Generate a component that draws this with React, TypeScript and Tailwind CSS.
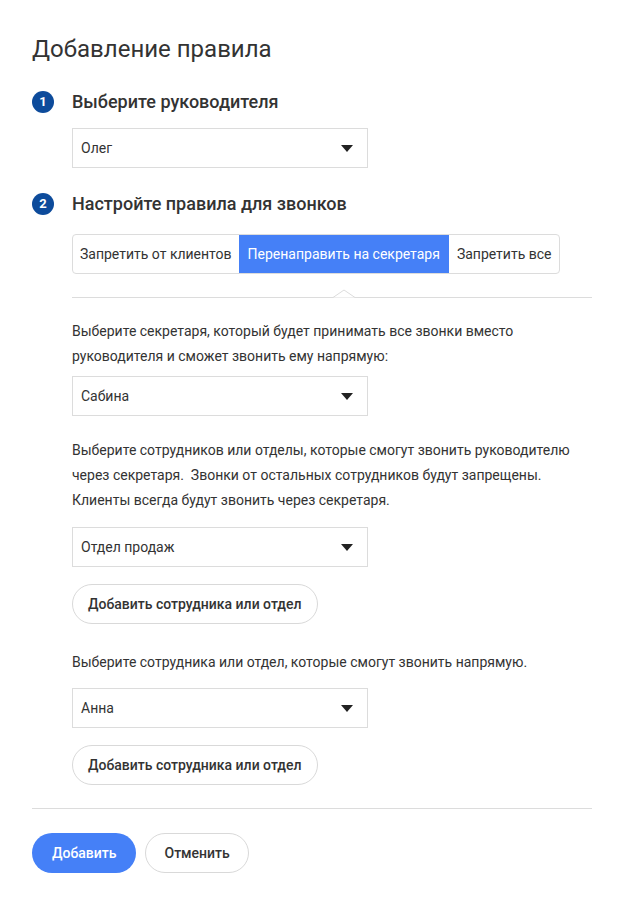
import React from "react";

function Step({ n, title }: { n: number; title: string }) {
    return (
        <div className="flex items-center gap-[18px]">
            <div className="flex h-[22px] w-[22px] items-center justify-center rounded-full bg-[#0d4b9b] text-[13px] font-bold text-white">
                {n}
            </div>
            <h2 className="text-[18px] font-medium text-[#333]">{title}</h2>
        </div>
    );
}

function Select({ value }: { value: string }) {
    return (
        <div className="flex h-[40px] w-[296px] items-center justify-between border border-[#dcdcdc] bg-white pl-[8px] pr-[14px] text-[14px] text-[#333]">
            <span>{value}</span>
            <svg width="12" height="7" viewBox="0 0 12 7">
                <path d="M0 0h12L6 7z" fill="#222" />
            </svg>
        </div>
    );
}

function AddButton() {
    return (
        <button className="h-[40px] w-fit rounded-full border border-[#d9d9d9] bg-white px-[15px] text-[14px] font-medium text-[#333]">
            Добавить сотрудника или отдел
        </button>
    );
}

export default function App() {
    return (
        <div className="min-h-screen bg-white px-[32px] pt-[34px] font-['Roboto',sans-serif] text-[#333]">
            <h1 className="text-[24px] leading-[30px] text-[#333]">Добавление правила</h1>

            <div className="mt-[24px]">
                <Step n={1} title="Выберите руководителя" />
                <div className="ml-[40px] mt-[13px]">
                    <Select value="Олег" />
                </div>
            </div>

            <div className="mt-[22px]">
                <Step n={2} title="Настройте правила для звонков" />
                <div className="ml-[40px] mt-[17px]">
                    <div className="flex h-[40px] w-fit overflow-hidden rounded-[4px] border border-[#dcdcdc] text-[14px]">
                        <div className="flex items-center px-[7px]">Запретить от клиентов</div>
                        <div className="flex items-center bg-[#4580f7] px-[9px] text-white">Перенаправить на секретаря</div>
                        <div className="flex items-center px-[8px]">Запретить все</div>
                    </div>

                    <div className="relative mt-[23px] h-px bg-[#dcdcdc]">
                        <svg className="absolute left-[261px] top-[-8px]" width="22" height="9" viewBox="0 0 22 9">
                            <path d="M0 8.5L11 1L22 8.5" fill="white" stroke="#dcdcdc" />
                        </svg>
                    </div>

                    <p className="mt-[21px] whitespace-nowrap text-[14px] leading-[25px]">
                        Выберите секретаря, который будет принимать все звонки вместо
                        <br />
                        руководителя и сможет звонить ему напрямую:
                    </p>
                    <div className="mt-[7px]">
                        <Select value="Сабина" />
                    </div>

                    <p className="mt-[22px] whitespace-pre text-[14px] leading-[25px]">
                        {"Выберите сотрудников или отделы, которые смогут звонить руководителю"}
                        <br />
                        {"через секретаря.  Звонки от остальных сотрудников будут запрещены."}
                        <br />
                        {"Клиенты всегда будут звонить через секретаря."}
                    </p>
                    <div className="mt-[14px]">
                        <Select value="Отдел продаж" />
                    </div>
                    <div className="mt-[17px]">
                        <AddButton />
                    </div>

                    <p className="mt-[26px] text-[14px] leading-[25px]">
                        Выберите сотрудника или отдел, которые смогут звонить напрямую.
                    </p>
                    <div className="mt-[13px]">
                        <Select value="Анна" />
                    </div>
                    <div className="mt-[17px]">
                        <AddButton />
                    </div>
                </div>
            </div>

            <div className="mt-[23px] h-px bg-[#dcdcdc]" />

            <div className="mt-[24px] flex gap-[9px] pb-[32px]">
                <button className="h-[40px] rounded-full bg-[#4580f7] px-[20px] text-[14px] font-medium text-white">
                    Добавить
                </button>
                <button className="h-[40px] rounded-full border border-[#d9d9d9] bg-white px-[18px] text-[14px] font-medium text-[#333]">
                    Отменить
                </button>
            </div>
        </div>
    );
}
